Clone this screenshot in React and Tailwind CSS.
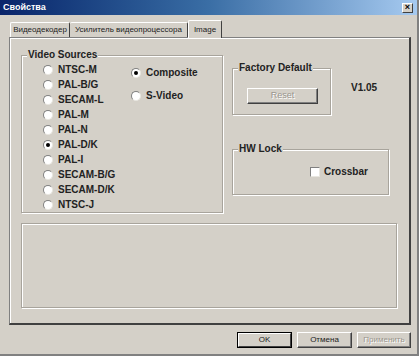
import React from "react";

const font = { fontFamily: '"Liberation Sans", Arial, sans-serif' };

function Radio({ label, checked }) {
  return (
    <div className="flex items-center h-[15px]">
      <span className="w-[10px] h-[10px] rounded-full bg-white border border-t-[#808080] border-l-[#808080] border-b-[#e8e6e0] border-r-[#e8e6e0] flex items-center justify-center shrink-0">
        {checked && <span className="w-[4px] h-[4px] rounded-full bg-black" />}
      </span>
      <span className="ml-[5px] text-[10px] font-bold text-[#222] leading-none">{label}</span>
    </div>
  );
}

function Group({ label, className, children }) {
  return (
    <div className={"relative border border-[#a8a49c] shadow-[1px_1px_0_#fff,inset_1px_1px_0_#fff] " + className}>
      {label && (
        <span className="absolute left-[5px] top-[-7px] px-[1px] bg-[#d4d0c8] text-[10px] font-bold text-[#222] leading-[12px]">
          {label}
        </span>
      )}
      {children}
    </div>
  );
}

export default function App() {
  const left = ["NTSC-M", "PAL-B/G", "SECAM-L", "PAL-M", "PAL-N", "PAL-D/K", "PAL-I", "SECAM-B/G", "SECAM-D/K", "NTSC-J"];

  return (
    <div style={font} className="w-[419px] h-[356px] bg-[#d4d0c8] flex flex-col overflow-hidden border-r-2 border-b-2 border-r-[#808080] border-b-[#808080]">
      {/* Title bar */}
      <div className="h-[15px] shrink-0 flex items-center justify-between bg-gradient-to-r from-[#0a246a] via-[#3a6ea5] to-[#a6caf0] pl-[3px] pr-[4px]">
        <span className="text-white text-[9px] font-bold leading-none">Свойства</span>
        <span className="w-[11px] h-[10px] bg-[#d4d0c8] border border-t-white border-l-white border-b-[#404040] border-r-[#404040] flex items-center justify-center text-[9px] font-bold leading-none text-black">
          ×
        </span>
      </div>

      {/* Tabs */}
      <div className="mt-[5px] h-[17px] shrink-0 flex items-end pl-[10px]">
        <div className="w-[60px] h-[15px] border-t border-l border-white border-r border-r-[#404040] rounded-t-[2px] flex items-center justify-center text-[8px] text-[#222] whitespace-nowrap">
          Видеодекодер
        </div>
        <div className="w-[118px] h-[15px] border-t border-white border-r border-r-[#404040] rounded-t-[2px] flex items-center justify-center text-[8px] text-[#222] whitespace-nowrap">
          Усилитель видеопроцессора
        </div>
        <div className="relative z-10 -mb-px w-[34px] h-[18px] bg-[#d4d0c8] border-t border-l border-white border-r border-r-[#404040] rounded-t-[2px] flex items-center justify-center text-[8px] text-[#222]">
          Image
        </div>
      </div>

      {/* Panel */}
      <div className="ml-[9px] w-[402px] h-[288px] shrink-0 border border-t-[#808080] border-l-[#808080] border-r-2 border-b-2 border-r-[#404040] border-b-[#404040] shadow-[inset_1px_1px_0_#fff] pt-[17px] pl-[11px]">
        <div className="flex items-start">
          <Group label="Video Sources" className="w-[202px] h-[158px] flex pt-[6px] pl-[21px]">
            <div className="w-[88px] flex flex-col">
              {left.map((l) => (
                <Radio key={l} label={l} checked={l === "PAL-D/K"} />
              ))}
            </div>
            <div className="flex flex-col mt-[3px] gap-[8px]">
              <Radio label="Composite" checked />
              <Radio label="S-Video" />
            </div>
          </Group>

          <div className="ml-[9px] mt-[13px] flex flex-col">
            <div className="flex items-start">
              <Group label="Factory Default" className="w-[99px] h-[47px] pt-[19px] pl-[14px]">
                <div className="w-[71px] h-[16px] border border-t-white border-l-white border-b-[#404040] border-r-[#404040] shadow-[inset_-1px_-1px_0_#808080] flex items-center justify-center text-[9px] text-[#9a968e] [text-shadow:1px_1px_0_#fff]">
                  Reset
                </div>
              </Group>
              <span className="ml-[20px] mt-[14px] text-[10px] font-bold text-[#222] leading-[12px]">V1.05</span>
            </div>

            <Group label="HW Lock" className="mt-[34px] w-[157px] h-[46px] flex items-start pt-[17px] pl-[77px]">
              <span className="w-[10px] h-[10px] bg-white border border-t-[#808080] border-l-[#808080] border-b-[#e8e6e0] border-r-[#e8e6e0] shrink-0" />
              <span className="ml-[4px] text-[10px] font-bold text-[#222] leading-[10px]">Crossbar</span>
            </Group>
          </div>
        </div>

        <Group className="mt-[10px] w-[376px] h-[85px]" />
      </div>

      {/* Buttons */}
      <div className="mt-[7px] ml-[237px] flex gap-[5px]">
        <div className="w-[55px] h-[16px] border border-black flex">
          <div className="flex-1 border border-t-white border-l-white border-b-[#404040] border-r-[#404040] flex items-center justify-center text-[8px] text-[#222]">
            OK
          </div>
        </div>
        <div className="w-[55px] h-[16px] border border-t-white border-l-white border-b-[#404040] border-r-[#404040] shadow-[inset_-1px_-1px_0_#808080] flex items-center justify-center text-[8px] text-[#222]">
          Отмена
        </div>
        <div className="w-[54px] h-[16px] border border-t-white border-l-white border-b-[#404040] border-r-[#404040] shadow-[inset_-1px_-1px_0_#808080] flex items-center justify-center text-[8px] text-[#9a968e] [text-shadow:1px_1px_0_#fff]">
          Применить
        </div>
      </div>
    </div>
  );
}
